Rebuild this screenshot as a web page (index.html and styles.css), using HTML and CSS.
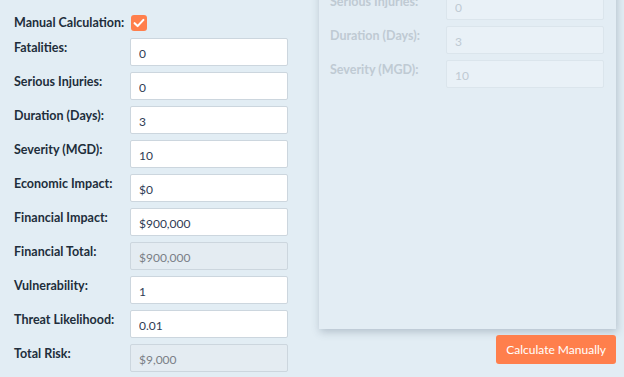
FILE: index.html
```html
<!DOCTYPE html>
<html lang="en">
<head>
<meta charset="utf-8">
<title>Manual Calculation</title>
<link rel="stylesheet" href="styles.css">
</head>
<body>
<div class="page">
  <form class="form">
    <div class="check-row">
      <span class="label">Manual Calculation:</span>
      <span class="checkbox" role="checkbox" aria-checked="true">
        <svg viewBox="0 0 16 16" width="16" height="16"><path d="M3.6 8.2 L6.6 11.1 L12.4 4.9" fill="none" stroke="#fff" stroke-width="2.1" stroke-linecap="round" stroke-linejoin="round"/></svg>
      </span>
    </div>
    <div class="row"><label class="label">Fatalities:</label><input class="field" value="0"></div>
    <div class="row"><label class="label">Serious Injuries:</label><input class="field" value="0"></div>
    <div class="row"><label class="label">Duration (Days):</label><input class="field" value="3"></div>
    <div class="row"><label class="label">Severity (MGD):</label><input class="field" value="10"></div>
    <div class="row"><label class="label">Economic Impact:</label><input class="field" value="$0"></div>
    <div class="row"><label class="label">Financial Impact:</label><input class="field" value="$900,000"></div>
    <div class="row"><label class="label">Financial Total:</label><input class="field readonly" value="$900,000" disabled></div>
    <div class="row"><label class="label">Vulnerability:</label><input class="field" value="1"></div>
    <div class="row"><label class="label">Threat Likelihood:</label><input class="field" value="0.01"></div>
    <div class="row"><label class="label">Total Risk:</label><input class="field readonly" value="$9,000" disabled></div>
  </form>
  <div class="side">
    <div class="panel">
      <div class="row"><label class="label">Fatalities:</label><input class="field" value="0" disabled></div>
      <div class="row"><label class="label">Serious Injuries:</label><input class="field" value="0" disabled></div>
      <div class="row"><label class="label">Duration (Days):</label><input class="field" value="3" disabled></div>
      <div class="row"><label class="label">Severity (MGD):</label><input class="field" value="10" disabled></div>
    </div>
    <div class="actions">
      <button type="button" class="btn">Calculate Manually</button>
    </div>
  </div>
</div>
</body>
</html>
```
FILE: styles.css
```css
html, body {
  margin: 0;
  padding: 0;
  background: #e2edf4;
  font-family: "Lato", "Liberation Sans", sans-serif;
  color: #212d3b;
  overflow: hidden;
}

.page {
  display: flex;
  align-items: flex-start;
  padding-left: 14px;
  gap: 31px;
}

.form {
  display: flex;
  flex-direction: column;
  padding-top: 14px;
  margin: 0;
}

.check-row {
  display: flex;
  align-items: center;
  height: 17px;
  margin-bottom: 7px;
}

.check-row .label {
  width: 117px;
  padding-top: 0;
}

.checkbox {
  width: 16px;
  height: 16px;
  border-radius: 3px;
  background: #ff7f4c;
  display: flex;
  align-items: center;
  justify-content: center;
}

.row {
  display: grid;
  grid-template-columns: 116px 158px;
  height: 28px;
  margin-bottom: 6px;
}

.label {
  font-size: 12.5px;
  font-weight: 700;
  line-height: 16px;
  padding-top: 2px;
  color: #212d3b;
}

.field {
  box-sizing: border-box;
  width: 158px;
  height: 28px;
  margin: 0;
  padding: 3px 8px 0;
  border: 1px solid #ccd6de;
  border-radius: 2px;
  background: #fff;
  font-family: inherit;
  font-size: 12px;
  color: #2f3c55;
  outline: none;
}

.field.readonly {
  background: #e4ecf2;
  color: #7a7f86;
}

.side {
  display: flex;
  flex-direction: column;
  width: 297px;
}

.panel {
  margin-top: -42px;
  padding: 0 11px 0 11px;
  height: 371px;
  box-sizing: border-box;
  background: #e3edf4;
  box-shadow: 1px 3px 8px rgba(60, 80, 100, 0.28);
}

.panel .label {
  color: #bfcad3;
}

.panel .field {
  background: #e9f1f7;
  border-color: #dbe5ec;
  color: #bfcad3;
}

.actions {
  display: flex;
  justify-content: flex-end;
  margin-top: 6px;
  margin-right: 0;
}

.btn {
  height: 29px;
  padding: 0 10px;
  border: none;
  border-radius: 3px;
  background: #ff7f4c;
  color: #fff;
  font-family: inherit;
  font-size: 12px;
}
```
